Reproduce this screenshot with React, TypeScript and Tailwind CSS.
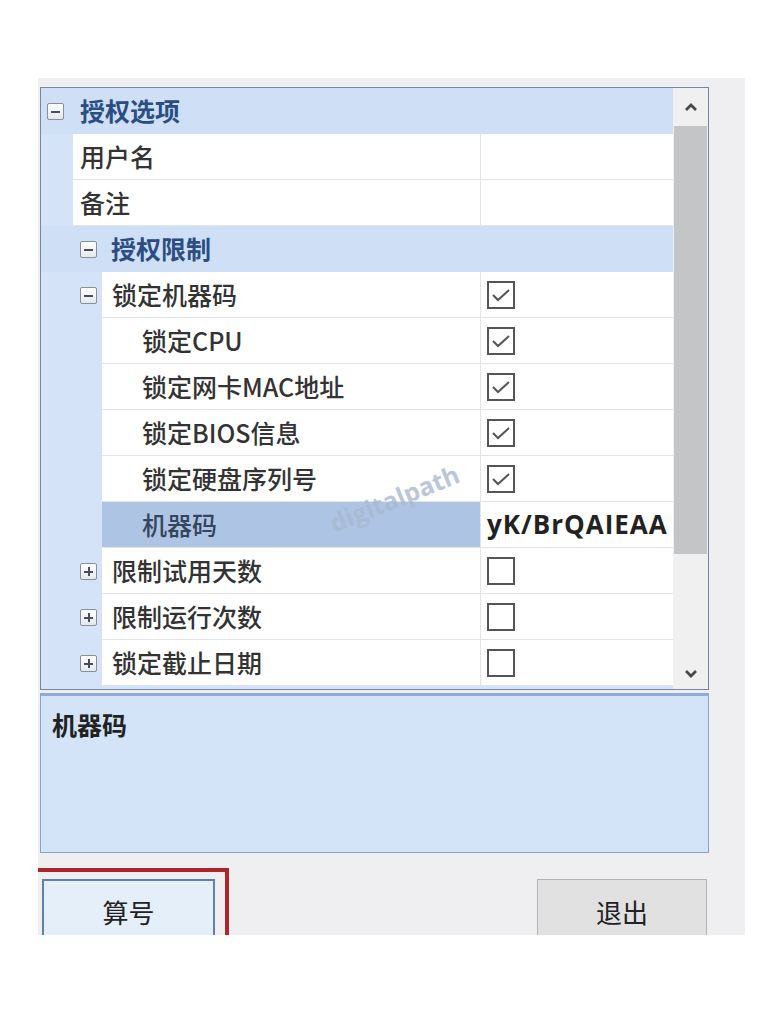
import React from "react";

type Row = {
  label: string;
  kind: "cat" | "item";
  level: 0 | 1 | 2 | 3;
  expand?: "minus" | "plus";
  check?: boolean;
  value?: string;
  selected?: boolean;
};

const ROWS: Row[] = [
  { label: "授权选项", kind: "cat", level: 0, expand: "minus" },
  { label: "用户名", kind: "item", level: 1 },
  { label: "备注", kind: "item", level: 1 },
  { label: "授权限制", kind: "cat", level: 1, expand: "minus" },
  { label: "锁定机器码", kind: "item", level: 2, expand: "minus", check: true },
  { label: "锁定CPU", kind: "item", level: 3, check: true },
  { label: "锁定网卡MAC地址", kind: "item", level: 3, check: true },
  { label: "锁定BIOS信息", kind: "item", level: 3, check: true },
  { label: "锁定硬盘序列号", kind: "item", level: 3, check: true },
  { label: "机器码", kind: "item", level: 3, value: "yK/BrQAIEAA", selected: true },
  { label: "限制试用天数", kind: "item", level: 2, expand: "plus", check: false },
  { label: "限制运行次数", kind: "item", level: 2, expand: "plus", check: false },
  { label: "锁定截止日期", kind: "item", level: 2, expand: "plus", check: false },
];

const cjk = "font-['Noto_Sans_CJK_SC','Noto_Sans',sans-serif]";

function Expander({ type }: { type: "minus" | "plus" }) {
  return (
    <div className="relative w-[17px] h-[17px] border border-[#8a8f96] rounded-[2px] bg-gradient-to-b from-white to-[#e4e8ee]">
      <div className="absolute left-[3px] top-[7px] w-[9px] h-[2px] bg-[#4a4f57]" />
      {type === "plus" && <div className="absolute left-[7px] top-[3px] w-[2px] h-[9px] bg-[#4a4f57]" />}
    </div>
  );
}

function CheckBox({ checked }: { checked: boolean }) {
  return (
    <div className="w-[28px] h-[28px] border-2 border-[#555] bg-white flex items-center justify-center">
      {checked && (
        <svg width="20" height="16" viewBox="0 0 20 16">
          <polyline points="2,8 7,13 18,3" fill="none" stroke="#555" strokeWidth="2" />
        </svg>
      )}
    </div>
  );
}

function GridRow({ row }: { row: Row }) {
  if (row.kind === "cat") {
    return (
      <div className="h-[46px] flex items-center bg-[#cfe0f6]">
        <div className={row.level === 0 ? "ml-[6px]" : "ml-[39px]"}>
          <Expander type={row.expand ?? "minus"} />
        </div>
        <span className={`${row.level === 0 ? "ml-[16px]" : "ml-[14px]"} text-[25px] font-bold text-[#2b4d84] ${cjk}`}>
          {row.label}
        </span>
      </div>
    );
  }

  const gutter = row.level === 1 ? "w-[32px]" : "w-[61px]";
  const pad = row.level === 1 ? "pl-[7px]" : row.level === 2 ? "pl-[10px]" : "pl-[40px]";

  return (
    <div className="h-[46px] flex">
      <div className={`${gutter} shrink-0 bg-[#d4e3f7] flex items-center`}>
        {row.expand && (
          <div className="ml-[39px]">
            <Expander type={row.expand} />
          </div>
        )}
      </div>
      <div
        className={`flex-1 flex items-center ${pad} border-b border-[#e3e4e6] ${
          row.selected ? "bg-[#adc4e4] text-[#34465e]" : "bg-white text-[#333]"
        } text-[25px] font-medium ${cjk}`}
      >
        {row.label}
      </div>
      <div className="w-[193px] shrink-0 flex items-center pl-[6px] bg-white border-l border-b border-[#e3e4e6] overflow-hidden">
        {row.check !== undefined && <CheckBox checked={row.check} />}
        {row.value && (
          <span className="text-[26px] font-bold tracking-[1px] text-[#222] whitespace-nowrap font-['Open_Sans',sans-serif]">
            {row.value}
          </span>
        )}
      </div>
    </div>
  );
}

function Chevron({ up }: { up?: boolean }) {
  return (
    <svg width="14" height="10" viewBox="0 0 14 10">
      <polyline
        points={up ? "2,8 7,3 12,8" : "2,2 7,7 12,2"}
        fill="none"
        stroke="#45484c"
        strokeWidth="2.8"
      />
    </svg>
  );
}

export default function App() {
  return (
    <div className="min-h-screen bg-white pt-[78px] pl-[38px]">
      <div className="relative w-[707px] h-[857px] bg-[#efeff1] pt-[9px] overflow-hidden">
        {/* property grid */}
        <div className="ml-[2px] w-[669px] border border-[#73889f] bg-[#d4e3f7] flex">
          <div className="w-[632px] h-[601px]">
            {ROWS.map((r) => (
              <GridRow key={r.label} row={r} />
            ))}
          </div>
          <div className="w-[35px] h-[601px] bg-[#f0f0f1] flex flex-col">
            <div className="h-[38px] flex items-center justify-center">
              <Chevron up />
            </div>
            <div className="h-[428px] mx-[1px] bg-[#c4c5c7]" />
            <div className="flex-1 flex items-end justify-center pb-[10px]">
              <Chevron />
            </div>
          </div>
        </div>

        {/* description */}
        <div className="ml-[2px] mt-[3px] w-[669px] h-[160px] border border-[#8aa3c2] border-t-[3px] border-t-[#8fadd3] bg-[#d3e4f9] px-[11px] pt-[16px]">
          <div className={`text-[25px] font-bold text-[#222] leading-none ${cjk}`}>机器码</div>
        </div>

        {/* buttons */}
        <div className="mt-[15px] flex justify-between pr-[38px]">
          <div className="w-[191px] border-t-4 border-r-4 border-[#ad262c] pl-[4px] pt-[7px]">
            <div className={`w-[173px] h-[70px] border-2 border-[#5d84a8] bg-[#e4effa] flex items-center justify-center pb-[6px] text-[26px] text-[#222] ${cjk}`}>
              算号
            </div>
          </div>
          <div className="pt-[11px]">
            <div className={`w-[170px] h-[70px] border border-[#b3b3b3] bg-[#e1e1e1] flex items-center justify-center pb-[6px] text-[26px] text-[#222] ${cjk}`}>
              退出
            </div>
          </div>
        </div>

        {/* watermark */}
        <div className="absolute left-[288px] top-[402px] -rotate-[22deg] text-[25px] font-bold text-[#a9b8cf]/80 font-['Open_Sans',sans-serif] pointer-events-none">
          digitalpath
        </div>
      </div>
    </div>
  );
}
